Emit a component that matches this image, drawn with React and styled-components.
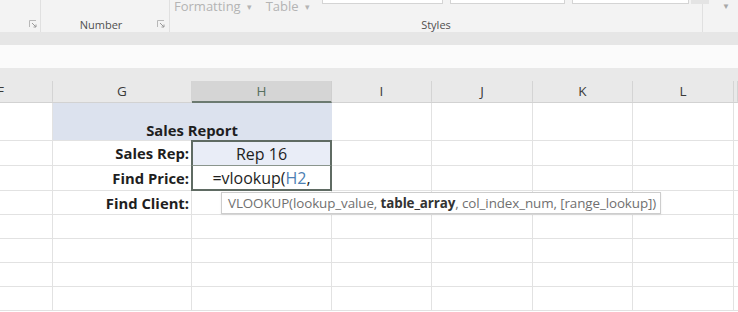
import React from "react";
import styled, { createGlobalStyle } from "styled-components";

const Global = createGlobalStyle`
  body {
    margin: 0;
    width: 738px;
    height: 312px;
    overflow: hidden;
    background: #fff;
    font-family: "Open Sans", "Noto Sans", sans-serif;
  }
`;

const COLS = "53px 139px 140px 100px 101px 100px 101px 1fr";

const Ribbon = styled.div`
  display: flex;
  height: 32px;
  background: #f3f3f3;
  overflow: hidden;
`;

const Group = styled.div`
  width: ${(p) => p.$w}px;
  flex: ${(p) => (p.$w ? "none" : "1")};
  display: flex;
  flex-direction: column;
  justify-content: space-between;
  border-right: ${(p) => (p.$edge ? "1px solid #e0e0e0" : "none")};
`;

const GroupTop = styled.div`
  display: flex;
  align-items: flex-start;
  margin-top: ${(p) => p.$shift || 0}px;
  padding-left: ${(p) => p.$pad || 0}px;
  height: 14px;
`;

const GroupFoot = styled.div`
  display: flex;
  align-items: center;
  justify-content: ${(p) => p.$justify || "center"};
  padding: 0 ${(p) => p.$pr || 0}px 1px ${(p) => p.$pl || 0}px;
  height: 14px;
  font-size: 11px;
  color: #505050;
`;

const GroupLabel = styled.span`
  flex: 1;
  text-align: center;
`;

const Launcher = styled.svg`
  width: 8px;
  height: 8px;
  flex: none;
`;

const Dropper = styled.span`
  font-size: 13px;
  color: #b4b4b4;
  white-space: nowrap;
  margin-right: ${(p) => p.$mr || 0}px;
  &::after {
    content: "▾";
    font-size: 9px;
    margin-left: 6px;
    position: relative;
    top: -1px;
  }
`;

const Gallery = styled.div`
  display: flex;
  margin-top: -4px;
  gap: 7px;
`;

const Swatch = styled.div`
  width: ${(p) => p.$w}px;
  height: 10px;
  background: #fff;
  border: 1px solid #d4d4d4;
  border-top: none;
`;

const Scroller = styled.div`
  width: 18px;
  height: 11px;
  margin-left: -5px;
  background: #e4e4e4;
`;

const MoreArrow = styled.span`
  font-size: 8px;
  color: #a8a8a8;
  padding: 0 0 0 19px;
  line-height: 12px;
`;

const Strip = styled.div`
  height: ${(p) => p.$h}px;
  background: ${(p) => p.$bg};
`;

const HeaderRow = styled.div`
  display: grid;
  grid-template-columns: ${COLS};
  height: 35px;
  background: #e9e9e9;
  border-bottom: 1px solid #d2d2d2;
  box-sizing: border-box;
`;

const ColHead = styled.div`
  align-self: end;
  height: 22px;
  display: flex;
  align-items: center;
  justify-content: ${(p) => (p.$left ? "flex-start" : "center")};
  font-size: 13.5px;
  color: ${(p) => (p.$active ? "#577060" : "#3a3a3a")};
  background: ${(p) => (p.$active ? "#d5d5d5" : "transparent")};
  border-right: 1px solid ${(p) => (p.$active ? "#cfcfcf" : "#d4d4d4")};
  border-bottom: 2px solid ${(p) => (p.$active ? "#6c7a70" : "transparent")};
  margin-bottom: -1px;
  box-sizing: border-box;
  overflow: hidden;
  span {
    margin-left: ${(p) => (p.$left ? "-3px" : "0")};
  }
`;

const Sheet = styled.div`
  position: relative;
`;

const Row = styled.div`
  display: grid;
  grid-template-columns: ${COLS};
  height: ${(p) => p.$h}px;
`;

const Cell = styled.div`
  grid-column: ${(p) => p.$span || "auto"};
  display: flex;
  align-items: ${(p) => p.$valign || "center"};
  justify-content: ${(p) =>
    p.$align === "right" ? "flex-end" : p.$align === "center" ? "center" : "flex-start"};
  padding: ${(p) => (p.$align === "right" ? "0 2px 0 0" : "0 2px")};
  padding-bottom: ${(p) => p.$pb || 0}px;
  background: ${(p) => p.$fill || "#fff"};
  border-right: 1px solid ${(p) => (p.$fill ? p.$fill : "#e2e2e2")};
  border-bottom: 1px solid #e2e2e2;
  box-sizing: border-box;
  font-size: ${(p) => (p.$bold ? 14.8 : 16)}px;
  font-weight: ${(p) => (p.$bold ? 700 : 400)};
  color: #1e1e1e;
  white-space: nowrap;
`;

const RangeCell = styled(Cell)`
  border: 2px solid #5f6b63;
  border-top-width: ${(p) => (p.$first ? 2 : 0)}px;
  border-bottom-width: ${(p) => (p.$first ? 1 : 2)}px;
  border-bottom-color: ${(p) => (p.$first ? "#8a958d" : "#5f6b63")};
  margin-left: -1px;
  margin-top: ${(p) => (p.$first ? -1 : 0)}px;
`;

const RefText = styled.span`
  color: #4d7fb3;
`;

const Tip = styled.div`
  position: absolute;
  left: 221px;
  top: 89px;
  width: 440px;
  height: 22px;
  box-sizing: border-box;
  background: #fff;
  border: 1px solid #cdcdcd;
  box-shadow: 0 1px 2px rgba(0, 0, 0, 0.08);
  display: flex;
  align-items: center;
  padding-left: 6px;
  font-size: 13.4px;
  letter-spacing: -0.1px;
  color: #707070;
  white-space: nowrap;
  b {
    color: #333;
    font-weight: 700;
  }
`;

const LauncherIcon = () => (
  <Launcher viewBox="0 0 8 8">
    <path d="M0.5 7V0.5H7" fill="none" stroke="#b8b8b8" strokeWidth="1" />
    <path d="M3 3L7 7M4.5 7H7V4.5" fill="none" stroke="#9a9a9a" strokeWidth="1" />
  </Launcher>
);

const columns = ["F", "G", "H", "I", "J", "K", "L", ""];

const EmptyCells = ({ from = 0 }) =>
  columns.slice(from).map((c, i) => <Cell key={i} />);

export default function App() {
  return (
    <>
      <Global />
      <Ribbon>
        <Group $w={40} $edge>
          <GroupTop />
          <GroupFoot $justify="flex-end" $pr={3}>
            <LauncherIcon />
          </GroupFoot>
        </Group>
        <Group $w={128} $edge>
          <GroupTop />
          <GroupFoot $pl={4} $pr={4}>
            <GroupLabel>Number</GroupLabel>
            <LauncherIcon />
          </GroupFoot>
        </Group>
        <Group $w={532} $edge>
          <GroupTop $shift={-3} $pad={4}>
            <Dropper $mr={14}>Formatting</Dropper>
            <Dropper $mr={12}>Table</Dropper>
            <Gallery>
              <Swatch $w={119} />
              <Swatch $w={113} />
              <Swatch $w={115} />
              <Scroller />
            </Gallery>
          </GroupTop>
          <GroupFoot>
            <GroupLabel>Styles</GroupLabel>
          </GroupFoot>
        </Group>
        <Group>
          <GroupTop>
            <MoreArrow>▼</MoreArrow>
          </GroupTop>
        </Group>
      </Ribbon>
      <Strip $h={13} $bg="#e6e6e6" />
      <Strip $h={23} $bg="#fbfbfb" />
      <HeaderRow>
        {columns.map((c, i) => (
          <ColHead key={i} $active={c === "H"} $left={c === "F"}>
            <span>{c}</span>
          </ColHead>
        ))}
      </HeaderRow>
      <Sheet>
        <Row $h={38}>
          <Cell />
          <Cell $span="span 2" $fill="#dce2ee" $align="center" $valign="flex-end" $pb={0} $bold>
            Sales Report
          </Cell>
          <EmptyCells from={3} />
        </Row>
        <Row $h={25}>
          <Cell />
          <Cell $align="right" $bold>Sales Rep:</Cell>
          <RangeCell $first $align="center" $fill="#e9edf7">Rep 16</RangeCell>
          <EmptyCells from={3} />
        </Row>
        <Row $h={25}>
          <Cell />
          <Cell $align="right" $bold>Find Price:</Cell>
          <RangeCell $align="center">
            =vlookup(<RefText>H2</RefText>,
          </RangeCell>
          <EmptyCells from={3} />
        </Row>
        <Row $h={24}>
          <Cell />
          <Cell $align="right" $bold>Find Client:</Cell>
          <EmptyCells from={2} />
        </Row>
        {[0, 1, 2, 3].map((r) => (
          <Row key={r} $h={24}>
            <EmptyCells />
          </Row>
        ))}
        <Tip>
          VLOOKUP(lookup_value,&nbsp;<b>table_array</b>, col_index_num, [range_lookup])
        </Tip>
      </Sheet>
    </>
  );
}
